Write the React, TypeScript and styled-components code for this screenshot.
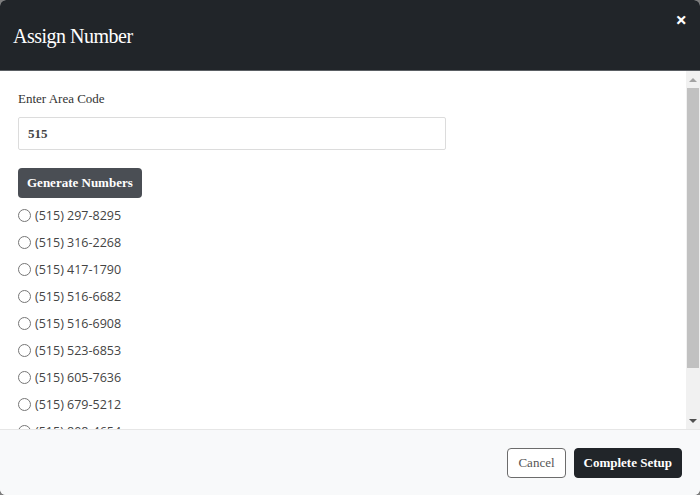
import styled, { createGlobalStyle } from "styled-components";

const GlobalStyle = createGlobalStyle`
    html, body {
        margin: 0;
        padding: 0;
        background: #7d7d7d;
    }
    * {
        box-sizing: border-box;
    }
`

const slab = `"Liberation Serif", "DejaVu Serif", serif`
const sans = `"Open Sans", "Noto Sans", sans-serif`

const numbers = [
    "(515) 297-8295",
    "(515) 316-2268",
    "(515) 417-1790",
    "(515) 516-6682",
    "(515) 516-6908",
    "(515) 523-6853",
    "(515) 605-7636",
    "(515) 679-5212",
    "(515) 808-4654",
    "(515) 867-2031",
]

export default function App() {
    return (
        <>
            <GlobalStyle/>
            <Modal>
                <Header>
                    <Title>Assign Number</Title>
                    <Close aria-label="Close">×</Close>
                </Header>
                <BodyWrap>
                    <Body>
                        <Label>Enter Area Code</Label>
                        <Input defaultValue="515"/>
                        <GenerateButton>Generate Numbers</GenerateButton>
                        <NumberList>
                            {numbers.map(n => (
                                <NumberRow key={n}>
                                    <Radio type="radio" name="number"/>
                                    {n}
                                </NumberRow>
                            ))}
                        </NumberList>
                    </Body>
                    <ScrollTrack>
                        <Arrow>
                            <svg width="8" height="5" viewBox="0 0 8 5"><path d="M0 5 L4 1 L8 5 Z" fill="#a3a3a3"/></svg>
                        </Arrow>
                        <Thumb/>
                        <Arrow>
                            <svg width="8" height="5" viewBox="0 0 8 5"><path d="M0 0 L8 0 L4 4 Z" fill="#505050"/></svg>
                        </Arrow>
                    </ScrollTrack>
                </BodyWrap>
                <Footer>
                    <Button variant="outline">Cancel</Button>
                    <Button variant="dark">Complete Setup</Button>
                </Footer>
            </Modal>
        </>
    );
}

const Modal = styled.div`
    width: 700px;
    height: 495px;
    display: flex;
    flex-direction: column;
    background: #fff;
    border-radius: 6px;
    overflow: hidden;
`

const Header = styled.div`
    height: 71px;
    flex-shrink: 0;
    display: flex;
    align-items: center;
    justify-content: space-between;
    padding: 0 13px;
    background: #212529;
    border-bottom: 1px solid #5a5e63;
`

const Title = styled.h4`
    margin: 3px 0 0;
    font-family: ${slab};
    font-weight: 400;
    font-size: 20px;
    letter-spacing: -0.5px;
    color: #fff;
`

const Close = styled.button`
    align-self: flex-start;
    margin-top: 10px;
    padding: 0;
    border: none;
    background: none;
    font-family: ${sans};
    font-weight: 700;
    font-size: 20px;
    line-height: 20px;
    color: #fff;
`

const BodyWrap = styled.div`
    flex: 1;
    min-height: 0;
    display: flex;
`

const Body = styled.div`
    flex: 1;
    overflow: hidden;
    padding: 18px 18px 16px;
`

const ScrollTrack = styled.div`
    width: 14px;
    flex-shrink: 0;
    display: flex;
    flex-direction: column;
    background: #f1f1f1;
`

const Arrow = styled.div`
    height: 16px;
    display: flex;
    align-items: center;
    justify-content: center;
`

const Thumb = styled.div`
    height: 280px;
    margin: 1px 1px 0;
    margin-bottom: auto;
    background: #c1c1c1;
`

const Label = styled.div`
    font-family: ${slab};
    font-size: 13px;
    line-height: 20px;
    color: #333;
`

const Input = styled.input`
    display: block;
    width: 428px;
    height: 33px;
    margin-top: 8px;
    padding: 0 9px;
    border: 1px solid #dcdcdc;
    border-radius: 2px;
    font-family: ${slab};
    font-weight: 700;
    font-size: 13px;
    color: #444;
    outline: none;
`

const GenerateButton = styled.button`
    display: block;
    height: 30px;
    margin-top: 18px;
    padding: 0 9px;
    border: none;
    border-radius: 4px;
    background: #4a4e54;
    font-family: ${slab};
    font-weight: 700;
    font-size: 13px;
    color: #fff;
`

const NumberList = styled.div`
    margin-top: 4px;
`

const NumberRow = styled.label`
    display: flex;
    align-items: center;
    height: 27px;
    font-family: ${sans};
    font-size: 12.5px;
    color: #444;
`

const Radio = styled.input`
    width: 13px;
    height: 13px;
    margin: 0 4px 0 0;
`

const Footer = styled.div`
    height: 66px;
    flex-shrink: 0;
    display: flex;
    align-items: center;
    justify-content: flex-end;
    gap: 8px;
    padding: 0 18px;
    background: #f8f9fa;
    border-top: 1px solid #e6e6e6;
`

const Button = styled.button<{ variant: "outline" | "dark" }>`
    height: 30px;
    padding: 0 ${p => p.variant === "dark" ? 9 : 10}px;
    border-radius: 4px;
    font-family: ${slab};
    font-size: 13px;
    border: 1px solid ${p => p.variant === "dark" ? "#212529" : "#6c6c6c"};
    background: ${p => p.variant === "dark" ? "#212529" : "#fff"};
    color: ${p => p.variant === "dark" ? "#fff" : "#555"};
    font-weight: ${p => p.variant === "dark" ? 700 : 400};
`
